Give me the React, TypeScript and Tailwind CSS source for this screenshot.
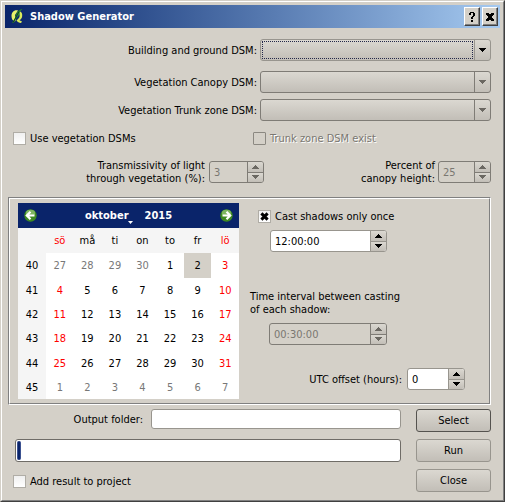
import { useId, type ReactNode } from "react";

const FACE = "bg-linear-to-b from-[#dbd8d1] to-[#c2beb7]";

function Triangle({ up = false, muted = false }: { up?: boolean; muted?: boolean }) {
  return (
    <svg
      width="7"
      height="4"
      viewBox="0 0 7 4"
      shapeRendering="crispEdges"
      className={muted ? "fill-[#6b6862]" : "fill-black"}
      aria-hidden="true"
    >
      {up ? (
        <path d="M3 0h1v1h1v1h1v1h1v1H0V3h1V2h1V1h1z" />
      ) : (
        <path d="M0 0h7v1H6v1H5v1H4v1H3V3H2V2H1V1H0z" />
      )}
    </svg>
  );
}

function ComboRow({
  label,
  disabled = false,
  focused = false,
}: {
  label: string;
  disabled?: boolean;
  focused?: boolean;
}) {
  const id = useId();
  return (
    <div className="flex items-center gap-[3px]">
      <label htmlFor={id} className="w-[249px] shrink-0 text-right">
        {label}
      </label>
      <div
        className={`relative flex h-[22px] min-w-0 flex-1 rounded-[3px] border ${
          disabled ? "border-[#7f7c76]" : "border-[#98958e]"
        } ${FACE}`}
      >
        <select
          id={id}
          disabled={disabled}
          className="h-full w-full appearance-none bg-transparent px-2 outline-none"
        />
        {focused && (
          <span className="pointer-events-none absolute inset-y-px right-[17px] left-px border border-dotted border-[#24284a]" />
        )}
        <span
          className={`pointer-events-none absolute inset-y-0 right-0 flex w-4 items-center justify-center border-l ${
            disabled ? "border-[#7f7c76]" : "border-[#98958e]"
          }`}
        >
          <Triangle muted={disabled} />
        </span>
      </div>
    </div>
  );
}

function Spin({
  id,
  value,
  width,
  disabled = false,
}: {
  id?: string;
  value: string;
  width: string;
  disabled?: boolean;
}) {
  const line = disabled ? "border-[#7f7c76]" : "border-[#98958e]";
  return (
    <div
      className={`flex h-[22px] shrink-0 overflow-hidden rounded-[3px] border ${line} ${width} ${
        disabled ? "bg-[#d4d0c8] text-[#7a7771]" : "bg-white text-black"
      }`}
    >
      <input
        id={id}
        type="text"
        aria-label={id ? undefined : "Time"}
        defaultValue={value}
        disabled={disabled}
        className="min-w-0 flex-1 bg-transparent pl-1 outline-none"
      />
      <span className={`flex w-4 shrink-0 flex-col border-l ${line}`}>
        <button
          type="button"
          aria-label="Increase"
          disabled={disabled}
          className={`flex flex-1 items-center justify-center border-b ${line} ${FACE}`}
        >
          <Triangle up muted={disabled} />
        </button>
        <button
          type="button"
          aria-label="Decrease"
          disabled={disabled}
          className={`flex flex-1 items-center justify-center ${FACE}`}
        >
          <Triangle muted={disabled} />
        </button>
      </span>
    </div>
  );
}

function Check({
  children,
  checked = false,
  disabled = false,
}: {
  children: ReactNode;
  checked?: boolean;
  disabled?: boolean;
}) {
  return (
    <label className="flex items-center gap-1">
      <span className="relative flex size-[13px] shrink-0">
        <input
          type="checkbox"
          defaultChecked={checked}
          disabled={disabled}
          className={`size-[13px] appearance-none border ${
            disabled
              ? "rounded-[1px] border-[#8b8881]"
              : "border-[#b0ada6] bg-linear-to-b from-[#f0f0f0] to-white"
          }`}
        />
        {checked && (
          <svg
            viewBox="0 0 13 13"
            className="pointer-events-none absolute inset-0 size-[13px]"
            aria-hidden="true"
          >
            <path d="M3.400 3.400l6.200 6.200M9.600 3.400L3.400 9.600" stroke="#000" strokeWidth="3" />
          </svg>
        )}
      </span>
      <span className={disabled ? "text-[#7a7771] text-shadow-[1px_1px_0_#fff]" : ""}>
        {children}
      </span>
    </label>
  );
}

function PushButton({ children, active = false }: { children: ReactNode; active?: boolean }) {
  return (
    <button
      type="button"
      className={`h-[23px] w-[75px] rounded-[3px] border ${
        active ? "border-[#55534f]" : "border-[#98958e]"
      } ${FACE}`}
    >
      {children}
    </button>
  );
}

function NavArrow({ back = false }: { back?: boolean }) {
  return (
    <svg width="13" height="13" viewBox="0 0 13 13" aria-hidden="true">
      <circle cx="6.5" cy="6.5" r="6.2" fill="#3f8a22" />
      <ellipse cx="6.5" cy="4" rx="4.6" ry="3.2" fill="#7db560" />
      <path
        d={back ? "M10.5 6.5H3M6.5 2.8L2.8 6.5l3.7 3.7" : "M2.5 6.5H10M6.5 2.8l3.7 3.7-3.7 3.7"}
        stroke="#fff"
        strokeWidth="2.2"
        fill="none"
      />
    </svg>
  );
}

const DAYS = ["sö", "må", "ti", "on", "to", "fr", "lö"];
const FIRST_WEEK = 40;
const WEEKS = [
  [27, 28, 29, 30, 1, 2, 3],
  [4, 5, 6, 7, 8, 9, 10],
  [11, 12, 13, 14, 15, 16, 17],
  [18, 19, 20, 21, 22, 23, 24],
  [25, 26, 27, 28, 29, 30, 31],
  [1, 2, 3, 4, 5, 6, 7],
];

function dayClass(week: number, col: number, day: number) {
  const outside = (week === 0 && day > 20) || week === 5;
  if (outside) return "text-[#787878]";
  if (week === 0 && day === 2) return "bg-[#d4d0c8] text-black";
  return col === 0 || col === 6 ? "text-[#ff0000]" : "text-black";
}

function Calendar() {
  return (
    <div className="w-[221px] shrink-0 bg-white">
      <div className="flex h-[25px] items-center justify-between bg-[#0a246a] px-1.5 font-bold text-white">
        <button type="button" aria-label="Previous month">
          <NavArrow back />
        </button>
        <div className="flex gap-4">
          <button type="button" className="relative">
            oktober
            <svg
              width="5"
              height="3"
              viewBox="0 0 5 3"
              className="absolute -right-1 -bottom-0.5 fill-white"
              aria-hidden="true"
            >
              <path d="M0 0h5L2.500 3z" />
            </svg>
          </button>
          <button type="button">2015</button>
        </div>
        <button type="button" aria-label="Next month">
          <NavArrow />
        </button>
      </div>
      <table className="w-full table-fixed border-collapse text-center">
        <thead>
          <tr className="h-[25px] bg-[#f5f5f5]">
            <th className="w-7" aria-label="Week" />
            {DAYS.map((d, i) => (
              <th
                key={d}
                scope="col"
                className={`p-0 font-normal ${i === 0 || i === 6 ? "text-[#ff0000]" : "text-black"}`}
              >
                {d}
              </th>
            ))}
          </tr>
        </thead>
        <tbody>
          {WEEKS.map((week, w) => (
            <tr key={w} className={w === 0 || w === 3 ? "h-[25px]" : "h-6"}>
              <th scope="row" className="bg-[#f5f5f5] p-0 font-normal">
                {FIRST_WEEK + w}
              </th>
              {week.map((day, c) => (
                <td key={c} className={`p-0 ${dayClass(w, c, day)}`}>
                  {day}
                </td>
              ))}
            </tr>
          ))}
        </tbody>
      </table>
    </div>
  );
}

function TitleButton({ label, children }: { label: string; children: ReactNode }) {
  return (
    <button
      type="button"
      aria-label={label}
      className="flex h-[19px] w-4 items-center justify-center border border-t-white border-r-[#404040] border-b-[#404040] border-l-white bg-[#d4d0c8] shadow-[inset_-1px_-1px_0_#808080]"
    >
      {children}
    </button>
  );
}

export default function App() {
  return (
    <main className="border border-t-[#d4d0c8] border-r-[#404040] border-b-[#404040] border-l-[#d4d0c8] bg-[#d4d0c8] font-['DejaVu_Sans_Condensed','DejaVu_Sans',sans-serif] text-[11px] leading-[13px] text-black">
      <div className="border border-t-white border-r-[#808080] border-b-[#808080] border-l-white px-[3px] pt-[3px] pb-2">
        <header className="flex h-[23px] items-center bg-linear-to-r from-[#0a246a] to-[#a6caf0] pr-0.5 pl-1.5">
          <svg width="12" height="15" viewBox="0 0 12 15" aria-hidden="true">
            <path d="M7 1.500C3 .5.500 3.500.500 7c0 3 1.300 5 3.500 5.500L5 10.500 4 6z" fill="#e9f26a" />
            <path d="M8 2c2.500.500 3.500 2.500 3.200 5-.2 2-1.200 3.500-2.700 4.200l2.500 1.300-1 1.500c-2 0-3.500-1-4.500-2.500L7 10c1.500-1 2-3 1.500-5z" fill="#dcec5c" />
            <path d="M11.500 0C9 .5 6.500 2 5.500 4.500L4 9l-3 5 2-.5L5.500 9 8 6l1-3.500z" fill="#2d8a28" />
            <path d="M8 2.500L4 10l-2 3.500" stroke="#0d3d24" fill="none" />
          </svg>
          <h1 className="ml-[7px] flex-1 font-bold text-white">Shadow Generator</h1>
          <div className="flex gap-0.5">
            <TitleButton label="Help">
              <svg width="6" height="10" viewBox="0 0 6 10" shapeRendering="crispEdges" aria-hidden="true">
                <path d="M1 0h4v1h1v3H5v1H4v2H2V5h1V4h1V1H2v2H0V1h1zM2 8h2v2H2z" />
              </svg>
            </TitleButton>
            <TitleButton label="Close window">
              <svg width="8" height="8" viewBox="0 0 8 8" shapeRendering="crispEdges" aria-hidden="true">
                <path d="M0 0h3v1h2V0h3v2H7v1H6v2h1v1h1v2H5V7H3v1H0V6h1V5h1V3H1V2H0z" />
              </svg>
            </TitleButton>
          </div>
        </header>

        <form className="pt-[11px] pr-[9px] pl-[3px]" onSubmit={(e) => e.preventDefault()}>
          <div className="flex flex-col">
            <ComboRow label="Building and ground DSM:" focused />
            <div className="mt-2.5 flex flex-col gap-1.5">
              <ComboRow label="Vegetation Canopy DSM:" disabled />
              <ComboRow label="Vegetation Trunk zone DSM:" disabled />
            </div>
          </div>

          <div className="mt-[11px] flex items-center pl-[5px]">
            <div className="w-60">
              <Check>Use vegetation DSMs</Check>
            </div>
            <Check disabled>Trunk zone DSM exist</Check>
          </div>

          <div className="mt-3.5 flex items-center justify-between">
            <div className="flex items-center gap-1">
              <label htmlFor="transmissivity" className="w-[197px] text-right">
                Transmissivity of light
                <br />
                through vegetation (%):
              </label>
              <Spin id="transmissivity" value="3" width="w-[55px]" disabled />
            </div>
            <div className="flex items-center gap-[3px]">
              <label htmlFor="canopy" className="text-right">
                Percent of
                <br />
                canopy height:
              </label>
              <Spin id="canopy" value="25" width="w-[53px]" disabled />
            </div>
          </div>

          <div className="mt-3 border border-[#808080] border-r-white border-b-white">
            <div className="flex border border-t-white border-r-[#808080] border-b-[#808080] border-l-white py-1 pl-2">
              <Calendar />
              <div className="ml-[11px] flex flex-1 flex-col items-start">
                <div className="mt-[7px] pl-2">
                  <Check checked>Cast shadows only once</Check>
                </div>
                <div className="mt-[7px] pl-5">
                  <Spin value="12:00:00" width="w-[117px]" />
                </div>
                <label htmlFor="interval" className="mt-[38px]">
                  Time interval between casting
                  <br />
                  of each shadow:
                </label>
                <div className="mt-[7px] pl-[19px]">
                  <Spin id="interval" value="00:30:00" width="w-[118px]" disabled />
                </div>
                <div className="mt-[23px] flex items-center gap-[5px] self-end pr-6">
                  <label htmlFor="utc">UTC offset (hours):</label>
                  <Spin id="utc" value="0" width="w-[58px]" />
                </div>
              </div>
            </div>
          </div>

          <div className="mt-1 flex gap-[15px]">
            <div className="flex flex-1 flex-col pl-[5px]">
              <div className="flex items-center gap-2">
                <label htmlFor="folder" className="w-[130px] text-right">
                  Output folder:
                </label>
                <input
                  id="folder"
                  type="text"
                  className="h-5 min-w-0 flex-1 rounded-[3px] border border-[#98958e] bg-white px-1 outline-none"
                />
              </div>
              <div
                role="progressbar"
                aria-label="Progress"
                aria-valuenow={1}
                className="mt-2.5 ml-0.5 h-[23px] rounded-[3px] border border-[#6f6c67] bg-white p-px"
              >
                <div className="h-full w-1 rounded-[2px] border-x border-[#3b5190] bg-[#0a246a]" />
              </div>
              <div className="mt-[13px]">
                <Check>Add result to project</Check>
              </div>
            </div>
            <div className="flex flex-col gap-[7px]">
              <PushButton active>Select</PushButton>
              <PushButton>Run</PushButton>
              <PushButton>Close</PushButton>
            </div>
          </div>
        </form>
      </div>
    </main>
  );
}
